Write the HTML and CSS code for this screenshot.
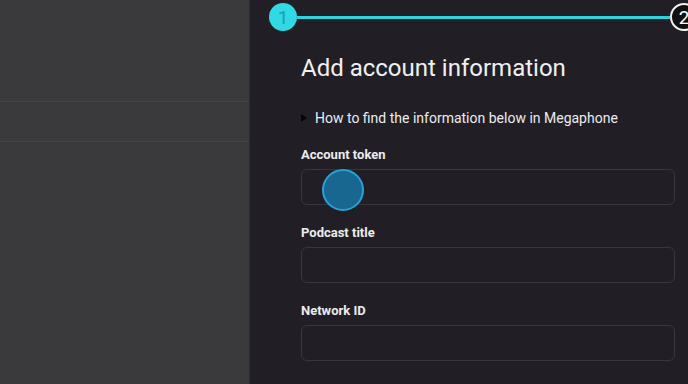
FILE: index.html
```html
<!DOCTYPE html>
<html lang="en">
<head>
  <meta charset="UTF-8">
  <meta name="viewport" content="width=device-width, initial-scale=1.0">
  <title>Add account information</title>
  <link rel="stylesheet" href="styles.css">
</head>
<body>

  <div class="layout">
    <!-- Painel da esquerda -->
    <aside class="sidebar">
      <div class="sidebar-top"></div>
      <div class="sidebar-row"></div>
      <div class="sidebar-rest"></div>
    </aside>

    <!-- Formulário -->
    <main class="panel">
      <div class="stepper">
        <span class="step step-active">1</span>
        <span class="step-line"></span>
        <span class="step step-next">2</span>
      </div>

      <div class="content">
        <h1>Add account information</h1>

        <details class="help">
          <summary>How to find the information below in Megaphone</summary>
        </details>

        <div class="field">
          <label for="token">Account token</label>
          <div class="input-wrap">
            <input type="text" id="token">
            <span class="cursor-dot"></span>
          </div>
        </div>

        <div class="field">
          <label for="title">Podcast title</label>
          <input type="text" id="title">
        </div>

        <div class="field">
          <label for="network">Network ID</label>
          <input type="text" id="network">
        </div>
      </div>
    </main>
  </div>

</body>
</html>
```

FILE: styles.css
```css
/* Estilos gerais */
body {
  margin: 0;
  font-family: Roboto, "Liberation Sans", sans-serif;
  background-color: #211f25;
  color: #ececef;
  overflow: hidden;
}

.layout {
  display: flex;
  height: 384px;
}

/* Painel da esquerda */
.sidebar {
  width: 249px;
  flex-shrink: 0;
  background-color: #3a3a3c;
  border-right: 1px solid #2c2b2f;
  display: flex;
  flex-direction: column;
}

.sidebar-top {
  height: 101px;
}

.sidebar-row {
  height: 39px;
  border-top: 1px solid #444446;
  border-bottom: 1px solid #444446;
}

.sidebar-rest {
  flex: 1;
}

/* Painel do formulário */
.panel {
  flex: 1;
  min-width: 0;
}

.stepper {
  display: flex;
  align-items: center;
  margin: 3px 0 0 19px;
  width: 429px;
}

.step {
  width: 28px;
  height: 28px;
  border-radius: 50%;
  box-sizing: border-box;
  display: flex;
  align-items: center;
  justify-content: center;
  font-size: 19px;
  flex-shrink: 0;
}

.step-active {
  background-color: #2fd9e6;
  color: #1e9fae;
}

.step-next {
  background-color: #111;
  border: 2px solid #f2f2f2;
  color: #fff;
}

.step-line {
  flex: 1;
  height: 3px;
  background-color: #2bd3df;
}

.content {
  padding-left: 51px;
  width: 374px;
}

h1 {
  font-size: 24px;
  font-weight: 400;
  margin: 23px 0 0;
  line-height: 28px;
  color: #f0f0f2;
}

/* Bloco de ajuda */
.help {
  margin-top: 28px;
  font-size: 14px;
}

.help summary {
  list-style: none;
  display: flex;
  align-items: center;
  cursor: pointer;
  color: #ececef;
  line-height: 16px;
}

.help summary::before {
  content: "";
  width: 0;
  height: 0;
  border-top: 4px solid transparent;
  border-bottom: 4px solid transparent;
  border-left: 6px solid #050505;
  margin-right: 8px;
}

/* Campos */
.field {
  margin-top: 21px;
}

.field + .field {
  margin-top: 20px;
}

.field label {
  display: block;
  font-size: 13px;
  font-weight: 700;
  line-height: 16px;
  margin-bottom: 6px;
}

.field input {
  display: block;
  width: 100%;
  height: 36px;
  box-sizing: border-box;
  background-color: transparent;
  border: 1px solid #37363c;
  border-radius: 6px;
  color: #fff;
  font-size: 14px;
  padding: 0 10px;
}

.input-wrap {
  position: relative;
}

/* Indicador de clique */
.cursor-dot {
  position: absolute;
  left: 21px;
  top: 0;
  width: 42px;
  height: 42px;
  box-sizing: border-box;
  border-radius: 50%;
  background-color: rgba(24, 108, 150, 0.95);
  border: 2px solid #2a9fd8;
}
```
